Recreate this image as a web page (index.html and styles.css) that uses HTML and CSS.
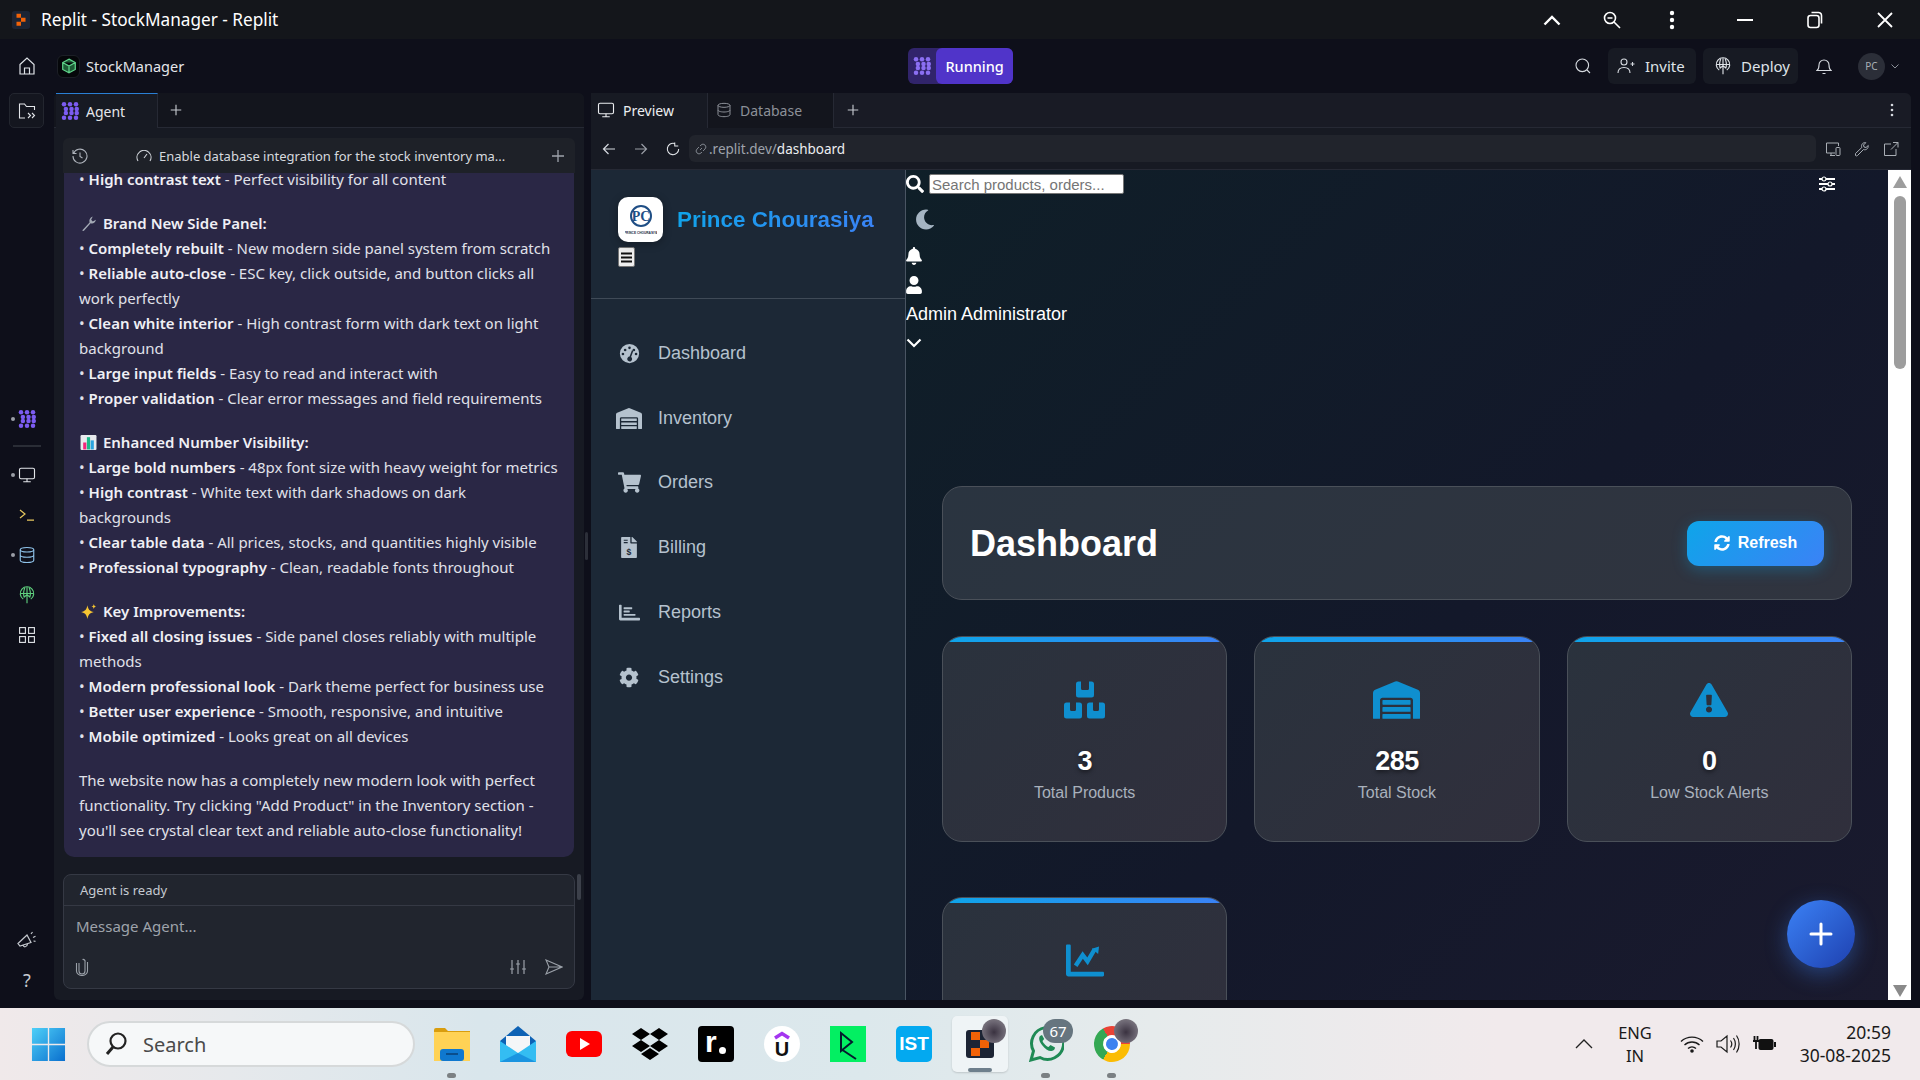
FILE: index.html
```html
<!DOCTYPE html>
<html lang="en">
<head>
  <meta charset="UTF-8" />
  <title>Replit - StockManager - Replit</title>
  <link rel="stylesheet" href="styles.css">
</head>
<body>
  <svg class="defs" width="0" height="0">
    <defs>
      <symbol id="agent" viewBox="0 0 24 24">
        <g fill="currentColor">
          <circle cx="4" cy="3" r="3"/><circle cx="12" cy="3" r="3"/><circle cx="20" cy="3" r="3"/>
          <circle cx="6.500" cy="9.300" r="3"/><circle cx="14" cy="9.300" r="3"/><circle cx="21" cy="9.300" r="3"/>
          <circle cx="6.500" cy="14.700" r="3"/><circle cx="14" cy="14.700" r="3"/><circle cx="21" cy="14.700" r="3"/>
          <circle cx="4" cy="21" r="3"/><circle cx="12" cy="21" r="3"/><circle cx="20" cy="21" r="3"/>
        </g>
      </symbol>
      <symbol id="monitor" viewBox="0 0 24 24"><rect x="2" y="3" width="20" height="14" rx="2" fill="none" stroke="currentColor" stroke-width="1.500"/><path d="M12 17v4M7 21h10" fill="none" stroke="currentColor" stroke-width="1.500"/></symbol>
      <symbol id="database" viewBox="0 0 24 24"><g fill="none" stroke="currentColor" stroke-width="1.500"><ellipse cx="12" cy="5" rx="9" ry="3"/><path d="M3 5v14c0 1.700 4 3 9 3s9-1.300 9-3V5M3 12c0 1.700 4 3 9 3s9-1.300 9-3"/></g></symbol>
      <symbol id="globe-up" viewBox="0 0 24 24"><g fill="none" stroke="currentColor" stroke-width="1.500"><path d="M7 17.500A9 9 0 1 1 17 17.500"/><path d="M3 10h18M9 2.500C7 8 7 12 8.500 15.500M15 2.500C17 8 17 12 15.500 15.500M12 1.500V23M8 15l4-3.500 4 3.500"/></g></symbol>
      <symbol id="plus" viewBox="0 0 16 16"><path d="M8 2v12M2 8h12" fill="none" stroke="currentColor" stroke-width="1.300"/></symbol>
      <symbol id="fa-gauge" viewBox="0 0 24 24"><path fill="currentColor" fill-rule="evenodd" d="M12 1a11 11 0 1 0 0 22 11 11 0 0 0 0-22zM7 6.500a1.500 1.500 0 1 1 0 3 1.500 1.500 0 0 1 0-3zM12 4a1.500 1.500 0 1 1 0 3 1.500 1.500 0 0 1 0-3zM4.500 11a1.500 1.500 0 1 1 0 3 1.500 1.500 0 0 1 0-3zM19.500 11a1.500 1.500 0 1 1 0 3 1.500 1.500 0 0 1 0-3zM17 6.500a1.500 1.500 0 1 1 0 3 1.500 1.500 0 0 1 0-3zM14.800 8.200l1.600.6-2.600 7.200a2.800 2.800 0 1 1-1.700-.5z"/></symbol>
      <symbol id="fa-warehouse" viewBox="0 0 640 512"><path fill="currentColor" d="M504 352H136.400c-4.400 0-8 3.600-8 8l-.1 48c0 4.400 3.600 8 8 8H504c4.400 0 8-3.600 8-8v-48c0-4.400-3.600-8-8-8zm0 96H136.100c-4.400 0-8 3.600-8 8l-.1 48c0 4.400 3.600 8 8 8h368c4.400 0 8-3.600 8-8v-48c0-4.400-3.600-8-8-8zm0-192H136.600c-4.400 0-8 3.600-8 8l-.1 48c0 4.400 3.600 8 8 8H504c4.400 0 8-3.600 8-8v-48c0-4.400-3.600-8-8-8zm106.500-139L338.400 3.700a48.150 48.150 0 0 0-36.900 0L29.500 117C11.700 124.500 0 141.900 0 161.300V504c0 4.400 3.600 8 8 8h80c4.400 0 8-3.600 8-8V256c0-17.600 14.600-32 32.600-32h382.800c18 0 32.600 14.400 32.600 32v248c0 4.400 3.600 8 8 8h80c4.400 0 8-3.600 8-8V161.300c0-19.400-11.700-36.800-29.500-44.300z"/></symbol>
      <symbol id="fa-cart" viewBox="0 0 576 512"><path fill="currentColor" d="M528.120 301.319l47.273-208C578.806 78.301 567.391 64 551.990 64H159.208l-9.166-44.810C147.758 8.021 137.930 0 126.529 0H24C10.745 0 0 10.745 0 24v16c0 13.255 10.745 24 24 24h69.883l70.248 343.435C147.325 417.100 136 435.222 136 456c0 30.928 25.072 56 56 56s56-25.072 56-56c0-15.674-6.447-29.835-16.824-40h209.647C430.447 426.165 424 440.326 424 456c0 30.928 25.072 56 56 56s56-25.072 56-56c0-22.172-12.888-41.332-31.579-50.405l5.517-24.276c3.413-15.018-8.002-29.319-23.403-29.319H218.117l-6.545-32h293.145c11.206 0 20.920-7.754 23.403-18.681z"/></symbol>
      <symbol id="fa-invoice" viewBox="0 0 384 512"><path fill="currentColor" d="M377 105L279.100 7c-4.500-4.500-10.600-7-17-7H256v128h128v-6.100c0-6.300-2.500-12.400-7-16.900zM224 136V0H24C10.700 0 0 10.700 0 24v464c0 13.300 10.700 24 24 24h336c13.300 0 24-10.700 24-24V160H248c-13.200 0-24-10.800-24-24z"/><path d="M64 64h96v28H64zM64 124h96v28H64z" fill="#1c2836"/><text x="192" y="430" text-anchor="middle" font-family="Liberation Sans" font-weight="700" font-size="210" fill="#1c2836">$</text></symbol>
      <symbol id="fa-bars-chart" viewBox="0 0 512 512"><path fill="currentColor" d="M496 384H64V80c0-8.840-7.160-16-16-16H16C7.160 64 0 71.160 0 80v336c0 17.670 14.330 32 32 32h464c8.840 0 16-7.160 16-16v-32c0-8.840-7.160-16-16-16z"/><rect x="112" y="130" width="210" height="44" rx="10" fill="currentColor"/><rect x="112" y="210" width="150" height="44" rx="10" fill="currentColor"/><rect x="112" y="290" width="290" height="44" rx="10" fill="currentColor"/></symbol>
      <symbol id="fa-cog" viewBox="0 0 512 512"><path fill="currentColor" d="M487.400 315.700l-42.600-24.600c4.300-23.200 4.300-47 0-70.200l42.600-24.600c4.900-2.800 7.100-8.600 5.500-14-11.100-35.600-30-67.800-54.700-94.600-3.800-4.100-10-5.100-14.800-2.300L380.800 110c-17.900-15.400-38.500-27.300-60.800-35.100V25.800c0-5.600-3.900-10.500-9.400-11.700-36.700-8.200-74.300-7.800-109.200 0-5.500 1.200-9.400 6.100-9.400 11.700V75c-22.200 7.900-42.800 19.800-60.800 35.100L88.700 85.500c-4.900-2.800-11-1.900-14.800 2.300-24.700 26.700-43.600 58.900-54.700 94.600-1.700 5.400.6 11.200 5.500 14L67.300 221c-4.300 23.200-4.300 47 0 70.200l-42.600 24.600c-4.900 2.800-7.100 8.600-5.500 14 11.100 35.600 30 67.800 54.700 94.600 3.800 4.100 10 5.100 14.800 2.300l42.600-24.600c17.900 15.400 38.500 27.300 60.800 35.100v49.200c0 5.600 3.900 10.500 9.400 11.700 36.700 8.200 74.300 7.800 109.200 0 5.500-1.200 9.400-6.100 9.400-11.700v-49.200c22.200-7.900 42.800-19.800 60.800-35.100l42.600 24.600c4.900 2.800 11 1.900 14.800-2.300 24.700-26.700 43.600-58.900 54.700-94.600 1.500-5.500-.7-11.300-5.600-14.100zM256 336c-44.100 0-80-35.900-80-80s35.900-80 80-80 80 35.900 80 80-35.900 80-80 80z"/></symbol>
      <symbol id="fa-boxes" viewBox="0 0 41 37"><path fill="currentColor" fill-rule="evenodd" d="M14.500 0h2.500v7a1.500 1.500 0 0 0 1.500 1.500h5A1.500 1.500 0 0 0 25 7V0h2.500A2.500 2.500 0 0 1 30 2.500v11a2.500 2.500 0 0 1-2.500 2.500h-13a2.500 2.500 0 0 1-2.500-2.500v-11A2.500 2.500 0 0 1 14.500 0zM2.500 21H6v7a1.500 1.500 0 0 0 1.500 1.500h3A1.500 1.500 0 0 0 12 28v-7h3.500a2.500 2.500 0 0 1 2.500 2.500v11a2.500 2.500 0 0 1-2.500 2.500h-13A2.500 2.500 0 0 1 0 34.500v-11A2.500 2.500 0 0 1 2.500 21zM25.500 21H29v7a1.500 1.500 0 0 0 1.500 1.500h3A1.500 1.500 0 0 0 35 28v-7h3.500a2.500 2.500 0 0 1 2.500 2.500v11a2.500 2.500 0 0 1-2.500 2.500h-13a2.500 2.500 0 0 1-2.500-2.500v-11a2.500 2.500 0 0 1 2.500-2.500z"/></symbol>
      <symbol id="fa-warn" viewBox="0 0 576 512"><path fill="currentColor" d="M569.517 440.013C587.975 472.007 564.806 512 527.940 512H48.054c-36.937 0-59.999-40.055-41.577-71.987L246.423 24.028c18.467-32.009 64.720-31.951 83.154 0l239.940 416.985zM288 354c-25.405 0-46 20.595-46 46s20.595 46 46 46 46-20.595 46-46-20.595-46-46-46zm-43.673-165.346l7.418 136c.347 6.364 5.609 11.346 11.982 11.346h48.546c6.373 0 11.635-4.982 11.982-11.346l7.418-136c.375-6.874-5.098-12.654-11.982-12.654h-63.383c-6.884 0-12.356 5.780-11.981 12.654z"/></symbol>
      <symbol id="fa-line" viewBox="0 0 512 512"><path fill="currentColor" d="M496 400H64V48c0-8.840-7.160-16-16-16H16C7.160 32 0 39.160 0 48v384c0 17.670 14.330 32 32 32h464c8.840 0 16-7.160 16-16v-32c0-8.840-7.160-16-16-16z"/><path d="M130 320L225 175l65 85L385 100" fill="none" stroke="currentColor" stroke-width="58"/><path d="M350 90l95-30-12 100z" fill="currentColor"/></symbol>
      <symbol id="fa-sync" viewBox="0 0 512 512"><path fill="currentColor" d="M370.720 133.280C339.458 104.008 298.888 87.962 255.848 88c-77.458.068-144.328 53.178-162.791 126.850-1.344 5.363-6.122 9.150-11.651 9.150H24.103c-7.498 0-13.194-6.807-11.807-14.176C33.933 94.924 134.813 8 256 8c66.448 0 126.791 26.136 171.315 68.685L463.030 40.970C478.149 25.851 504 36.559 504 57.941V192c0 13.255-10.745 24-24 24H345.941c-21.382 0-32.090-25.851-16.971-40.971l41.750-41.749zM32 296h134.059c21.382 0 32.090 25.851 16.971 40.971l-41.750 41.750c31.262 29.273 71.835 45.319 114.876 45.280 77.418-.07 144.315-53.144 162.787-126.849 1.344-5.363 6.122-9.150 11.651-9.150h57.304c7.498 0 13.194 6.807 11.807 14.176C478.067 417.076 377.187 504 256 504c-66.448 0-126.791-26.136-171.315-68.685L48.970 471.030C33.851 486.149 8 475.441 8 454.059V320c0-13.255 10.745-24 24-24z"/></symbol>
    </defs>
  </svg>

  <!-- window title -->
  <div class="titlebar">
    <svg class="title-logo" viewBox="0 0 20 20"><rect width="20" height="20" rx="3" fill="#1c2434"/><path d="M5 3h5v4.500H5zM10 7.500h5V12h-5zM5 12h5v4.500H5z" fill="#f26207"/></svg>
    <span class="title-text">Replit - StockManager - Replit</span>
    <div class="win-tools">
      <button class="win-btn"><svg width="18" height="12" viewBox="0 0 18 12"><path d="M1.500 10.500L9 3l7.500 7.500" fill="none" stroke="#fff" stroke-width="2.400"/></svg></button>
      <button class="win-btn"><svg width="18" height="18" viewBox="0 0 18 18"><g fill="none" stroke="#fff" stroke-width="1.600"><circle cx="7" cy="7" r="5.500"/><path d="M4.500 7h5M11 11l6 6"/></g></svg></button>
      <button class="win-btn"><svg width="6" height="20" viewBox="0 0 6 20"><g fill="#fff"><circle cx="3" cy="3" r="2.200"/><circle cx="3" cy="10" r="2.200"/><circle cx="3" cy="17" r="2.200"/></g></svg></button>
    </div>
    <button class="win-ctl"><svg width="16" height="2" viewBox="0 0 16 2"><path d="M0 1h16" stroke="#fff" stroke-width="2"/></svg></button>
    <button class="win-ctl"><svg width="16" height="18" viewBox="0 0 16 18"><g fill="none" stroke="#fff" stroke-width="1.600"><rect x="1" y="4.500" width="11" height="12" rx="2.500"/><path d="M4.500 1.500h6.500a3 3 0 0 1 3.500 3v8"/></g></svg></button>
    <button class="win-ctl"><svg width="16" height="16" viewBox="0 0 16 16"><path d="M1 1l14 14M15 1L1 15" stroke="#fff" stroke-width="1.800"/></svg></button>
  </div>

  <!-- replit header -->
  <div class="topbar">
    <svg class="home-icon" viewBox="0 0 16 18"><path d="M1 7.500L8 1l7 6.500V17H1zM5.500 17v-6h5v6" fill="none" stroke="#dfe3e8" stroke-width="1.200"/></svg>
    <div class="app-icon"><svg width="16" height="16" viewBox="0 0 14 14"><path d="M7 1l5.500 3v6L7 13l-5.500-3V4zM1.500 4L7 7l5.500-3M7 7v6" fill="#1d5c36" stroke="#5fd38a" stroke-width="1.100"/></svg></div>
    <span class="app-name">StockManager</span>
    <div class="run-btn">
      <span class="run-agent"><svg class="ic-18"><use href="#agent"/></svg></span>
      <span class="run-label">Running</span>
    </div>
    <div class="top-right">
      <svg class="top-search" viewBox="0 0 16 16"><g fill="none" stroke="#d5d9df" stroke-width="1.100"><circle cx="7.300" cy="7.300" r="6.300"/><path d="M12 12l3 3"/></g></svg>
      <button class="top-btn invite">
        <svg width="18" height="18" viewBox="0 0 18 18"><g fill="none" stroke="#d5d9df" stroke-width="1.100"><circle cx="7" cy="5" r="3"/><path d="M1 16c0-3.500 2-5.500 6-5.500s6 2 6 5.500M13.500 7h4M15.500 5v4"/></g></svg>
        Invite
      </button>
      <button class="top-btn deploy">
        <svg class="ic-18"><use href="#globe-up"/></svg>
        Deploy
      </button>
      <svg class="top-bell" viewBox="0 0 16 18"><path d="M1 13.500c1.500-1 2-2.500 2-5.500a5 5 0 0 1 10 0c0 3 .5 4.500 2 5.500zM6.500 16.500h3" fill="none" stroke="#d5d9df" stroke-width="1.100"/></svg>
      <span class="avatar">PC</span>
      <svg class="avatar-caret" width="8" height="5" viewBox="0 0 8 5"><path d="M.5.500L4 4 7.500.500" fill="none" stroke="#8a8f98" stroke-width="1"/></svg>
    </div>
  </div>

  <div class="workspace">
    <!-- left rail -->
    <div class="rail">
      <button class="rail-toggle"><svg width="18" height="18" viewBox="0 0 18 18"><path d="M7 16H1.500V2h5l2 2.500h8V8M10 11l2.500 2.500L10 16M14 11l2.500 2.500L14 16" fill="none" stroke="#e3e6ea" stroke-width="1.100"/></svg></button>
      <div class="rail-list">
        <div class="rail-item dot agent-color"><svg class="ic-18"><use href="#agent"/></svg></div>
        <div class="rail-sep"></div>
        <div class="rail-item dot"><svg class="ic-18"><use href="#monitor"/></svg></div>
        <div class="rail-item"><svg width="16" height="12" viewBox="0 0 16 12"><path d="M1 1l5 4-5 4M8 11.200h7" fill="none" stroke="#e7c85f" stroke-width="1.200"/></svg></div>
        <div class="rail-item dot db-color"><svg class="ic-18"><use href="#database"/></svg></div>
        <div class="rail-item globe-color"><svg class="ic-18"><use href="#globe-up"/></svg></div>
        <div class="rail-item"><svg width="16" height="16" viewBox="0 0 16 16"><g fill="none" stroke="#e3e6ea" stroke-width="1.100"><rect x=".6" y=".6" width="5.800" height="5.800"/><rect x="9.600" y=".6" width="5.800" height="5.800"/><rect x=".6" y="9.600" width="5.800" height="5.800"/><rect x="9.600" y="9.600" width="5.800" height="5.800"/></g></svg></div>
      </div>
      <div class="rail-bottom">
        <div class="rail-item"><svg width="20" height="18" viewBox="0 0 20 18"><path d="M1 12.500L10 4l4 7.500-11 3.500zM6 14c.5 2.500 4 2.500 4.500-.8M14 3l1.500-2M16 6.500l2.500-1.200M16.500 10l2 .3" fill="none" stroke="#c5c9cf" stroke-width="1.200"/></svg></div>
        <div class="rail-item help">?</div>
      </div>
    </div>

    <!-- agent panel -->
    <div class="agent-panel">
      <div class="tabs">
        <div class="tab tab-agent"><svg class="ic-18 agent-color"><use href="#agent"/></svg>Agent</div>
        <svg class="tab-plus"><use href="#plus"/></svg>
      </div>
      <div class="chat-head">
        <svg width="16" height="16" viewBox="0 0 16 16"><g fill="none" stroke="#aeb3bb" stroke-width="1.100"><path d="M1.500 5.500A7 7 0 1 1 1 8M1 2v3.500h3.500M8 4.500V8.500l2.500 1.500"/></g></svg>
        <svg class="chat-gauge" width="16" height="12" viewBox="0 0 16 12"><path d="M2 11a7 7 0 1 1 12 0M8 8l3-4" fill="none" stroke="#cfd3d9" stroke-width="1.100"/></svg>
        <span class="chat-title">Enable database integration for the stock inventory ma...</span>
        <svg class="chat-plus"><use href="#plus"/></svg>
      </div>
      <div class="chat-msg">
        <div class="msg-inner">
          <p class="para">
            <span class="line">• <b>High contrast text</b> - Perfect visibility for all content</span>
          </p>
          <p class="para">
            <span class="line"><svg class="emoji" viewBox="0 0 16 16"><path d="M2 14.500L9 7c-.7-2 .3-4.500 3-5.500l-1.500 3 1.500 1.500 3-1.500c-.5 2.700-3 4-5 3.200L3.500 15z" fill="#a3a9b5"/></svg> <b>Brand New Side Panel:</b></span>
            <span class="line">• <b>Completely rebuilt</b> - New modern side panel system from scratch</span>
            <span class="line">• <b>Reliable auto-close</b> - ESC key, click outside, and button clicks all</span>
            <span class="line">work perfectly</span>
            <span class="line">• <b>Clean white interior</b> - High contrast form with dark text on light</span>
            <span class="line">background</span>
            <span class="line">• <b>Large input fields</b> - Easy to read and interact with</span>
            <span class="line">• <b>Proper validation</b> - Clear error messages and field requirements</span>
          </p>
          <p class="para">
            <span class="line"><svg class="emoji" viewBox="0 0 16 16"><rect x=".5" y="1" width="15" height="14" rx="1" fill="#e8eaee"/><rect x="3" y="8" width="3" height="6.500" fill="#f4257a"/><rect x="6.500" y="3" width="3" height="11.500" fill="#1bb98a"/><rect x="10" y="6" width="3" height="8.500" fill="#2aa4e0"/></svg> <b>Enhanced Number Visibility:</b></span>
            <span class="line">• <b>Large bold numbers</b> - 48px font size with heavy weight for metrics</span>
            <span class="line">• <b>High contrast</b> - White text with dark shadows on dark</span>
            <span class="line">backgrounds</span>
            <span class="line">• <b>Clear table data</b> - All prices, stocks, and quantities highly visible</span>
            <span class="line">• <b>Professional typography</b> - Clean, readable fonts throughout</span>
          </p>
          <p class="para">
            <span class="line"><svg class="emoji" viewBox="0 0 16 16"><path d="M7 2c.8 4 2 5.500 6 6.500-4 1-5.200 2.500-6 6.500-.8-4-2-5.500-6-6.500 4-1 5.200-2.500 6-6.500zM13 1c.3 1.500.8 2 2.300 2.300-1.500.3-2 .8-2.300 2.300-.3-1.500-.8-2-2.300-2.300C12.200 3 12.700 2.500 13 1z" fill="#f7c531"/></svg> <b>Key Improvements:</b></span>
            <span class="line">• <b>Fixed all closing issues</b> - Side panel closes reliably with multiple</span>
            <span class="line">methods</span>
            <span class="line">• <b>Modern professional look</b> - Dark theme perfect for business use</span>
            <span class="line">• <b>Better user experience</b> - Smooth, responsive, and intuitive</span>
            <span class="line">• <b>Mobile optimized</b> - Looks great on all devices</span>
          </p>
          <p class="para">
            <span class="line">The website now has a completely new modern look with perfect</span>
            <span class="line">functionality. Try clicking "Add Product" in the Inventory section -</span>
            <span class="line">you'll see crystal clear text and reliable auto-close functionality!</span>
          </p>
        </div>
      </div>
      <div class="composer">
        <div class="composer-status">Agent is ready</div>
        <div class="composer-input">Message Agent...</div>
        <div class="composer-actions">
          <svg width="14" height="18" viewBox="0 0 14 18"><path d="M4 5v8a3 3 0 0 0 6 0V4a2 2 0 0 0-2.500-2.500M1.500 5v8a5.500 4.500 0 0 0 11 0V4" fill="none" stroke="#9aa0a8" stroke-width="1.100"/></svg>
          <svg class="composer-tune" width="18" height="16" viewBox="0 0 18 16"><path d="M3 1v14M9 1v14M15 1v14M1 10h4M7 5h4M13 10h4" fill="none" stroke="#9aa0a8" stroke-width="1.200"/></svg>
          <svg width="18" height="16" viewBox="0 0 18 16"><path d="M1 1l16 7-16 7 3-7zM4 8h13" fill="none" stroke="#9aa0a8" stroke-width="1.100"/></svg>
        </div>
      </div>
      <span class="composer-thumb"></span>
    </div>

    <div class="splitter"></div>

    <!-- preview panel -->
    <div class="preview-panel">
      <div class="tabs">
        <div class="tab tab-preview"><svg class="ic-18"><use href="#monitor"/></svg>Preview</div>
        <div class="tab tab-db"><svg class="ic-16"><use href="#database"/></svg>Database</div>
        <svg class="tab-plus"><use href="#plus"/></svg>
        <svg class="tab-kebab" width="4" height="14" viewBox="0 0 4 14"><g fill="#d5d9df"><circle cx="2" cy="2" r="1.300"/><circle cx="2" cy="7" r="1.300"/><circle cx="2" cy="12" r="1.300"/></g></svg>
      </div>
      <div class="browser-bar">
        <svg class="nav-ic" viewBox="0 0 14 14"><path d="M13 7H1.500M6.500 2L1.500 7l5 5" fill="none" stroke="#d5d9df" stroke-width="1.200"/></svg>
        <svg class="nav-ic" viewBox="0 0 14 14"><path d="M1 7h11.500M7.500 2l5 5-5 5" fill="none" stroke="#9a9ea6" stroke-width="1.200"/></svg>
        <svg class="nav-ic" viewBox="0 0 16 16"><path d="M14.500 8A6.500 6.500 0 1 1 10 1.800M10 .5v4h4" fill="none" stroke="#e4e7eb" stroke-width="1.200"/></svg>
        <div class="url-bar">
          <svg width="14" height="14" viewBox="0 0 14 14"><path d="M6 8l2-2M5 5L3 7a2.800 2.800 0 0 0 4 4l1-1M9 9l2-2a2.800 2.800 0 0 0-4-4L6 4" fill="none" stroke="#7f848c" stroke-width="1"/></svg>
          <span class="url-host">.replit.dev/</span><span class="url-path">dashboard</span>
        </div>
        <svg class="bar-ic first" viewBox="0 0 16 16"><path d="M10 12H1.500V2h12v3M5 14.500h5M6 12v2.500" fill="none" stroke="#a9aeb5" stroke-width="1"/><rect x="11" y="6.500" width="4" height="8" rx=".8" fill="none" stroke="#a9aeb5"/></svg>
        <svg class="bar-ic" viewBox="0 0 16 16"><path d="M1.500 14.500a1.500 1.500 0 0 0 2 0l6-6c2.500 1 5-1 4.800-4l-2.300 2-2-.5-.5-2 2.300-2.300c-3-.5-5 2-4 4.800l-6.300 6z" fill="none" stroke="#a9aeb5" stroke-width="1"/></svg>
        <svg class="bar-ic" viewBox="0 0 16 16"><path d="M8 3H1.500v11.500H13V8M8 8.500L15 1.500M10 1.500h5v5" fill="none" stroke="#a9aeb5" stroke-width="1"/></svg>
      </div>

      <div class="app-frame">
        <aside class="sidebar">
          <div class="side-head">
            <div class="brand">
              <div class="brand-logo">
                <svg width="32" height="36" viewBox="0 0 32 36"><circle cx="16" cy="14" r="10" fill="#fff" stroke="#1f4e85" stroke-width="2"/><text x="16" y="19" text-anchor="middle" font-family="Liberation Serif" font-size="14" font-weight="700" fill="#1f4e85">PC</text><text x="16" y="32" text-anchor="middle" font-family="Liberation Sans" font-size="3.200" font-weight="700" fill="#1b2b45">PRINCE CHOURASIYA</text></svg>
              </div>
              <h2 class="brand-name">Prince Chourasiya</h2>
            </div>
            <button class="menu-btn"><svg width="11" height="11" viewBox="0 0 11 11"><path d="M0 1.500h11M0 5.500h11M0 9.500h11" stroke="#111" stroke-width="1.800"/></svg></button>
          </div>
          <nav class="side-nav">
            <a class="nav-item"><span class="nav-ic-box"><svg width="21" height="21"><use href="#fa-gauge"/></svg></span>Dashboard</a>
            <a class="nav-item"><span class="nav-ic-box"><svg width="26" height="21"><use href="#fa-warehouse"/></svg></span>Inventory</a>
            <a class="nav-item"><span class="nav-ic-box"><svg width="23" height="21"><use href="#fa-cart"/></svg></span>Orders</a>
            <a class="nav-item"><span class="nav-ic-box"><svg width="16" height="21"><use href="#fa-invoice"/></svg></span>Billing</a>
            <a class="nav-item"><span class="nav-ic-box"><svg width="21" height="21"><use href="#fa-bars-chart"/></svg></span>Reports</a>
            <a class="nav-item"><span class="nav-ic-box"><svg width="20" height="21"><use href="#fa-cog"/></svg></span>Settings</a>
          </nav>
        </aside>

        <main class="main">
          <header class="app-top">
            <div class="search-row">
              <svg width="18" height="18" viewBox="0 0 512 512"><path fill="#fff" d="M505 442.700L405.300 343c-4.500-4.500-10.600-7-17-7H372c27.600-35.300 44-79.700 44-128C416 93.100 322.900 0 208 0S0 93.100 0 208s93.100 208 208 208c48.300 0 92.700-16.400 128-44v16.300c0 6.400 2.500 12.500 7 17l99.700 99.700c9.400 9.400 24.600 9.400 33.900 0l28.300-28.300c9.400-9.400 9.400-24.600.1-34zM208 336c-70.700 0-128-57.200-128-128 0-70.700 57.200-128 128-128 70.700 0 128 57.200 128 128 0 70.700-57.200 128-128 128z"/></svg>
              <input class="search-input" type="text" placeholder="Search products, orders..." />
              <svg class="tune-ic" width="16" height="16" viewBox="0 0 16 16"><path d="M0 3h16M0 8h16M0 13h16" stroke="#fff" stroke-width="1.800"/><g fill="#101a22" stroke="#fff" stroke-width="1.200"><circle cx="5" cy="3" r="2"/><circle cx="11" cy="8" r="2"/><circle cx="5" cy="13" r="2"/></g></svg>
            </div>
            <svg class="moon" width="20" height="21" viewBox="0 0 512 512"><path fill="#a5b4c2" d="M283.211 512c78.962 0 151.079-35.925 198.857-94.792 7.068-8.708-.639-21.430-11.562-19.350-124.203 23.654-238.262-71.576-238.262-196.954 0-72.222 38.662-138.635 101.498-174.394 9.686-5.512 7.250-20.197-3.756-22.230A258.156 258.156 0 0 0 283.211 0c-141.309 0-256 114.511-256 256 0 141.309 114.511 256 256 256z"/></svg>
            <svg class="bell" width="16" height="18" viewBox="0 0 448 512"><path fill="#fff" d="M224 512c35.320 0 63.970-28.650 63.970-64H160.030c0 35.350 28.650 64 63.970 64zm215.390-149.710c-19.320-20.760-55.470-51.990-55.470-154.290 0-77.700-54.480-139.900-127.940-155.160V32c0-17.670-14.320-32-31.980-32s-31.980 14.330-31.980 32v20.840C118.560 68.100 64.080 130.300 64.080 208c0 102.300-36.150 133.530-55.470 154.290-6 6.450-8.660 14.160-8.610 21.710.11 16.400 12.980 32 32.100 32h383.800c19.120 0 32-15.600 32.100-32 .05-7.550-2.610-15.270-8.610-21.710z"/></svg>
            <svg class="user" width="16" height="18" viewBox="0 0 448 512"><path fill="#fff" d="M224 256c70.700 0 128-57.300 128-128S294.700 0 224 0 96 57.300 96 128s57.300 128 128 128zm89.600 32h-16.700c-22.200 10.200-46.900 16-72.900 16s-50.600-5.800-72.900-16h-16.700C60.200 288 0 348.200 0 422.400V464c0 26.500 21.500 48 48 48h352c26.500 0 48-21.500 48-48v-41.600c0-74.200-60.200-134.400-134.400-134.400z"/></svg>
            <div class="user-name">Admin Administrator</div>
            <svg class="caret" width="16" height="10" viewBox="0 0 16 10"><path d="M1.500 1.500L8 8l6.500-6.500" fill="none" stroke="#fff" stroke-width="2.200"/></svg>
          </header>

          <section class="content">
            <div class="page-head">
              <h1>Dashboard</h1>
              <button class="refresh-btn"><svg width="16" height="16"><use href="#fa-sync"/></svg>Refresh</button>
            </div>
            <div class="stats">
              <div class="stat-card">
                <svg class="stat-ic" width="41" height="37"><use href="#fa-boxes"/></svg>
                <div class="stat-num">3</div>
                <div class="stat-label">Total Products</div>
              </div>
              <div class="stat-card">
                <svg class="stat-ic" width="47" height="38"><use href="#fa-warehouse"/></svg>
                <div class="stat-num">285</div>
                <div class="stat-label">Total Stock</div>
              </div>
              <div class="stat-card">
                <svg class="stat-ic" width="38" height="34"><use href="#fa-warn"/></svg>
                <div class="stat-num">0</div>
                <div class="stat-label">Low Stock Alerts</div>
              </div>
              <div class="stat-card">
                <svg class="stat-ic" width="38" height="38"><use href="#fa-line"/></svg>
              </div>
            </div>
          </section>
          <button class="fab"><svg width="24" height="24" viewBox="0 0 24 24"><path d="M12 2v20M2 12h20" stroke="#fff" stroke-width="3" stroke-linecap="round"/></svg></button>
        </main>

        <div class="scrollbar">
          <span class="arrow-up"></span>
          <span class="thumb"></span>
          <span class="arrow-down"></span>
        </div>
      </div>
    </div>
  </div>

  <!-- windows taskbar -->
  <footer class="taskbar">
    <svg class="win-logo" viewBox="0 0 36 36">
      <defs><linearGradient id="winblue" x1="0" y1="0" x2="1" y2="1"><stop offset="0" stop-color="#4fd0f8"/><stop offset="1" stop-color="#0a6fce"/></linearGradient></defs>
      <path d="M1 1h16.300v16.300H1zM18.700 1H35v16.300H18.700zM1 18.700h16.300V35H1zM18.700 18.700H35V35H18.700z" fill="url(#winblue)"/>
    </svg>
    <div class="task-search">
      <svg width="22" height="24" viewBox="0 0 22 24"><g fill="none" stroke="#222" stroke-width="2.200"><circle cx="13" cy="9" r="7.500"/><path d="M8 15l-6 7" stroke-width="3"/></g></svg>
      <span>Search</span>
    </div>
    <div class="task-apps">
      <div class="app-slot running">
        <svg width="36" height="34" viewBox="0 0 36 34"><path d="M0 3a2 2 0 0 1 2-2h9l3 3h22v6H0z" fill="#d99d0e"/><path d="M0 5h36v29H0z" fill="#ffd255"/><rect x="6" y="22" width="24" height="12" rx="3" fill="#0f78cf"/><path d="M12 27h12" stroke="#0a4e8c" stroke-width="2"/></svg>
      </div>
      <div class="app-slot">
        <svg width="36" height="36" viewBox="0 0 36 36"><path d="M0 15L18 0l18 15v21H0z" fill="#0d62b5"/><path d="M6 10h24v17H6z" fill="#f4f6f8"/><path d="M0 15l18 12 18-12v21H0z" fill="#34bdf2"/><path d="M0 36l18-9 18 9z" fill="#1a94e0"/></svg>
      </div>
      <div class="app-slot">
        <svg width="36" height="26" viewBox="0 0 36 26"><rect width="36" height="26" rx="6" fill="#f00"/><path d="M14 7l10 6-10 6z" fill="#fff"/></svg>
      </div>
      <div class="app-slot">
        <svg width="36" height="32" viewBox="0 0 36 32"><path d="M9 0l9 6-9 6-9-6zM27 0l9 6-9 6-9-6zM9 12l9 6-9 6-9-6zM27 12l9 6-9 6-9-6zM18 20l9 6-9 6-9-6z" fill="#000"/></svg>
      </div>
      <div class="app-slot"><div class="ic-rtg">r<i></i></div></div>
      <div class="app-slot"><div class="ic-udemy"><svg width="36" height="36" viewBox="0 0 36 36"><path d="M11 12l7-4.500 7 4.500" fill="none" stroke="#a435f0" stroke-width="3.500"/><text x="18" y="30" text-anchor="middle" font-family="Liberation Sans" font-weight="700" font-size="20" fill="#111">U</text></svg></div></div>
      <div class="app-slot"><div class="ic-dc"><svg width="36" height="36" viewBox="0 0 36 36"><path d="M11 7v18l11-9zM11 25v-2l15 10" fill="none" stroke="#05192d" stroke-width="2"/></svg></div></div>
      <div class="app-slot"><div class="ic-ist">IST</div></div>
      <div class="app-slot active">
        <svg width="28" height="28" viewBox="0 0 28 28"><rect width="28" height="28" rx="3" fill="#1c2434"/><path d="M5 2h9v8H5zM14 10h9v8h-9zM5 18h9v8H5z" fill="#f26207"/></svg>
        <span class="thumb-pic"></span>
      </div>
      <div class="app-slot running">
        <svg width="36" height="36" viewBox="0 0 36 36"><path d="M3 34l2.500-9A16 16 0 1 1 12 31.500z" fill="none" stroke="#1f8a55" stroke-width="3"/><path d="M12 10c-1.500 2-1 5 2 9s7 6.500 9.500 6 3.500-2 3.500-3.500l-4.500-2.500-2 2c-2-.5-5-3.500-6-6l1.700-2L14 9z" fill="#1f8a55"/></svg>
        <span class="count-badge">67</span>
      </div>
      <div class="app-slot running">
        <div class="ic-chrome"><i></i></div>
        <span class="thumb-pic"></span>
      </div>
    </div>
    <div class="tray">
      <svg class="tray-caret" width="18" height="10" viewBox="0 0 18 10"><path d="M1 9l8-8 8 8" fill="none" stroke="#222" stroke-width="1.300"/></svg>
      <div class="lang">ENG<br>IN</div>
      <svg class="tray-ic" width="24" height="18" viewBox="0 0 24 18"><path d="M1 6.500a16 16 0 0 1 22 0M4.500 10a11 11 0 0 1 15 0M8 13.500a6 6 0 0 1 8 0" fill="none" stroke="#1a1a1a" stroke-width="1.400"/><circle cx="12" cy="16" r="1.800" fill="#1a1a1a"/></svg>
      <svg class="tray-ic" width="24" height="20" viewBox="0 0 24 20"><path d="M1 7v6h4l6 5V2L5 7zM14.500 6.500c1.500 2 1.500 5 0 7M17.500 4c2.500 3.500 2.500 8.500 0 12M20.500 1.500c3.500 5 3.500 12 0 17" fill="none" stroke="#1a1a1a" stroke-width="1.200"/></svg>
      <svg class="tray-ic" width="24" height="20" viewBox="0 0 24 20"><path d="M1 7h6M2.500 2v5M5.500 2v5M4 7v8" fill="none" stroke="#111" stroke-width="1.800"/><rect x="6.500" y="5" width="15" height="11" rx="2" fill="#111"/><rect x="22" y="8" width="2" height="5" fill="#111"/></svg>
      <div class="clock">20:59<br>30-08-2025</div>
    </div>
  </footer>
</body>
</html>
```

FILE: styles.css
```css
* {
  box-sizing: border-box;
}
html, body {
  margin: 0;
  width: 1920px;
  height: 1080px;
  overflow: hidden;
}
body {
  display: flex;
  flex-direction: column;
  background: #0e0f1a;
  color: #e4e6ea;
  font-family: "Noto Sans", "Liberation Sans", sans-serif;
}
button {
  font-family: inherit;
  border: none;
  background: none;
  color: inherit;
  padding: 0;
}
.defs {
  position: absolute;
}
.ic-18 {
  width: 18px;
  height: 18px;
}
.ic-16 {
  width: 16px;
  height: 16px;
}

/* title bar */
.titlebar {
  height: 39px;
  flex: none;
  display: flex;
  align-items: center;
  background: #14161b;
  padding-left: 12px;
}
.title-logo {
  width: 18px;
  height: 20px;
  margin-right: 11px;
}
.title-text {
  font-size: 17.200px;
  color: #fff;
}
.win-tools {
  margin-left: auto;
  margin-right: 8px;
  display: flex;
}
.win-btn {
  width: 60px;
  height: 39px;
  display: flex;
  align-items: center;
  justify-content: center;
}
.win-ctl {
  width: 70px;
  height: 39px;
  display: flex;
  align-items: center;
  justify-content: center;
}

/* replit header */
.topbar {
  height: 54px;
  flex: none;
  display: flex;
  align-items: center;
  padding-left: 19px;
  position: relative;
}
.home-icon {
  width: 16px;
  height: 18px;
}
.app-icon {
  width: 23px;
  height: 23px;
  margin-left: 22px;
  background: #05070a;
  border: 1px solid #1c1f26;
  border-radius: 6px;
  display: flex;
  align-items: center;
  justify-content: center;
}
.app-name {
  font-size: 14.500px;
  margin-left: 6px;
}
.run-btn {
  display: flex;
  height: 36px;
  margin-left: 724px;
  background: #31246b;
  border-radius: 6px;
}
.run-agent {
  width: 28px;
  display: flex;
  align-items: center;
  justify-content: center;
  color: #8b6ff2;
}
.run-label {
  width: 77px;
  display: flex;
  align-items: center;
  justify-content: center;
  background: #5034c9;
  border-radius: 6px;
  font-size: 14.500px;
  font-weight: 500;
  color: #fff;
}
.top-right {
  margin-left: auto;
  display: flex;
  align-items: center;
  padding-right: 21px;
}
.top-search {
  width: 16px;
  height: 16px;
  margin-right: 17px;
}
.top-btn {
  height: 36px;
  display: flex;
  align-items: center;
  gap: 10px;
  background: #171a23;
  border-radius: 6px;
  font-size: 15px;
  color: #dfe3e8;
}
.invite {
  width: 88px;
  padding-left: 9px;
}
.deploy {
  width: 95px;
  margin-left: 7px;
  padding-left: 11px;
  gap: 9px;
}
.top-bell {
  width: 16px;
  height: 18px;
  margin-left: 18px;
}
.avatar {
  width: 27px;
  height: 27px;
  margin-left: 26px;
  border-radius: 50%;
  background: #2b2e38;
  color: #a9aeb6;
  font-size: 10px;
  display: flex;
  align-items: center;
  justify-content: center;
}
.avatar-caret {
  margin-left: 6px;
}

/* workspace */
.workspace {
  height: 907px;
  flex: none;
  display: flex;
}
.rail {
  width: 54px;
  flex: none;
  display: flex;
  flex-direction: column;
  position: relative;
}
.rail-toggle {
  width: 35px;
  height: 35px;
  margin-left: 9px;
  border: 1px solid #23262f;
  border-radius: 5px;
  background: #14161f;
  display: flex;
  align-items: center;
  justify-content: center;
}
.rail-list {
  margin-top: 271px;
}
.rail-item {
  position: relative;
  height: 40px;
  display: flex;
  align-items: center;
  justify-content: center;
  color: #e3e6ea;
}
.rail-item.dot::before {
  content: "";
  position: absolute;
  left: 11px;
  top: 18px;
  width: 4px;
  height: 4px;
  border-radius: 50%;
  background: #9a9ea6;
}
.rail-sep {
  width: 28px;
  height: 2px;
  margin: 6px auto 8px;
  background: #2a2d36;
}
.rail-bottom {
  margin-top: auto;
}
.help {
  font-size: 18px;
  color: #c5c9cf;
}
.rail-item.agent-color,
.agent-color {
  color: #7c5cf2;
}
.rail-item.db-color {
  color: #8fc3ea;
}
.rail-item.globe-color {
  color: #5fd07e;
}

/* shared tabs */
.tabs {
  height: 35px;
  flex: none;
  display: flex;
  align-items: center;
  border-bottom: 1px solid #262934;
  background: #13151d;
  border-radius: 6px 6px 0 0;
}
.tab {
  height: 35px;
  display: flex;
  align-items: center;
  font-size: 14px;
}
.tab-plus {
  width: 14px;
  height: 14px;
  color: #c5c9cf;
}

/* agent panel */
.agent-panel {
  width: 530px;
  flex: none;
  display: flex;
  flex-direction: column;
  position: relative;
  background: #171a23;
  border-radius: 6px;
}
.tab-agent {
  width: 102px;
  margin-left: 2px;
  padding-left: 5px;
  gap: 7px;
  background: #171a23;
  border-top: 1px solid #2a7fd4;
  border-right: 1px solid #262934;
  margin-bottom: -1px;
}
.agent-panel .tab-plus {
  margin-left: 11px;
}
.chat-head {
  position: relative;
  z-index: 1;
  height: 35px;
  margin: 10px 9px 0;
  flex: none;
  display: flex;
  align-items: center;
  padding-left: 9px;
  background: #1e2128;
  border-radius: 6px 6px 0 0;
}
.chat-gauge {
  margin-left: 48px;
}
.chat-title {
  margin-left: 7px;
  font-size: 13px;
  color: #d6d9de;
  white-space: nowrap;
}
.chat-plus {
  width: 16px;
  height: 16px;
  margin-left: auto;
  margin-right: 9px;
  color: #9ea3ab;
}
.chat-msg {
  height: 684px;
  margin: 0 10px;
  flex: none;
  overflow: hidden;
  background: #2a2745;
  border-radius: 0 0 10px 10px;
}
.msg-inner {
  margin-top: -6px;
  padding-left: 15px;
  font-size: 15px;
  line-height: 25px;
  color: #e0e1e9;
  white-space: nowrap;
}
.msg-inner b {
  color: #f0f0f5;
  font-weight: 600;
}
.para {
  margin: 0 0 19px;
}
.line {
  display: block;
}
.emoji {
  width: 17px;
  height: 17px;
  vertical-align: -3px;
  margin: 0 2px 0 1px;
}
.composer {
  height: 115px;
  margin: 17px 9px 0;
  flex: none;
  background: #21252e;
  border: 1px solid #353944;
  border-radius: 8px;
}
.composer-status {
  height: 31px;
  padding-left: 16px;
  font-size: 13px;
  line-height: 30px;
  color: #c5cad1;
  border-bottom: 1px solid #353944;
}
.composer-input {
  height: 52px;
  padding: 10px 0 0 12px;
  font-size: 15px;
  color: #9ea3ab;
}
.composer-actions {
  display: flex;
  align-items: center;
  padding: 0 11px 0 11px;
}
.composer-tune {
  margin-left: auto;
  margin-right: 18px;
}
.composer-thumb {
  position: absolute;
  left: 523px;
  top: 781px;
  width: 4px;
  height: 26px;
  border-radius: 2px;
  background: #3c404a;
}
.splitter {
  width: 7px;
  flex: none;
  position: relative;
}
.splitter::after {
  content: "";
  position: absolute;
  left: 1px;
  top: 439px;
  width: 3px;
  height: 28px;
  border-radius: 2px;
  background: #2c2f39;
}

/* preview panel */
.preview-panel {
  width: 1320px;
  flex: none;
  display: flex;
  flex-direction: column;
  background: #171a23;
  border-radius: 6px;
}
.preview-panel .tabs {
  background: #191b25;
}
.tab-preview {
  width: 117px;
  padding-left: 6px;
  gap: 8px;
  color: #eceef1;
  background: #171a23;
  border-right: 1px solid #262934;
}
.tab-db {
  width: 126px;
  padding-left: 8px;
  gap: 8px;
  color: #8c9098;
  background: #13151d;
  border-right: 1px solid #262934;
}
.preview-panel .tab-plus {
  margin-left: 12px;
}
.tab-kebab {
  margin-left: auto;
  margin-right: 17px;
}
.browser-bar {
  height: 42px;
  flex: none;
  display: flex;
  align-items: center;
  padding-left: 11px;
  border-bottom: 1px solid #262934;
}
.nav-ic {
  width: 14px;
  height: 14px;
  margin-right: 18px;
}
.url-bar {
  width: 1127px;
  height: 27px;
  margin-left: -9px;
  display: flex;
  align-items: center;
  padding-left: 5px;
  background: #21242c;
  border-radius: 6px;
  font-size: 13.500px;
}
.url-host {
  margin-left: 1px;
  color: #9ea3ab;
}
.url-path {
  color: #eceef1;
}
.bar-ic {
  width: 16px;
  height: 16px;
  margin-left: 13px;
}
.bar-ic.first {
  margin-left: 9px;
}
.app-frame {
  flex: 1;
  min-height: 0;
  display: flex;
  font-family: "Liberation Sans", Arial, sans-serif;
}

/* app sidebar */
.sidebar {
  width: 315px;
  flex: none;
  background: #1c2836;
  border-right: 1px solid #4a5563;
}
.side-head {
  height: 129px;
  padding: 27px 0 0 27px;
  border-bottom: 1px solid #3f4a57;
}
.brand {
  display: flex;
  align-items: center;
  gap: 14px;
}
.brand-logo {
  width: 45px;
  height: 45px;
  border-radius: 10px;
  background: #fff;
  box-shadow: 0 2px 8px rgba(0, 0, 0, 0.3);
  display: flex;
  align-items: center;
  justify-content: center;
}
.brand-name {
  margin: 0;
  font-size: 22.400px;
  font-weight: 700;
  white-space: nowrap;
  background: linear-gradient(135deg, #0ea5e9, #3b82f6);
  -webkit-background-clip: text;
  background-clip: text;
  color: transparent;
}
.menu-btn {
  display: flex;
  align-items: center;
  justify-content: center;
  width: 17px;
  height: 20px;
  margin-top: 5px;
  background: #efefef;
  border: 1px solid #767676;
  border-radius: 2px;
}
.side-nav {
  padding-top: 22px;
}
.nav-item {
  height: 64.800px;
  padding-left: 27px;
  display: flex;
  align-items: center;
  font-size: 18px;
  color: #b5c2ce;
}
.nav-ic-box {
  width: 26px;
  margin-left: -2px;
  margin-right: 16px;
  display: flex;
  justify-content: center;
}

/* app main */
.main {
  flex: 1;
  min-width: 0;
  position: relative;
  overflow: hidden;
  background: linear-gradient(135deg, #0f1f28 0%, #13182a 55%, #1a1a2e 100%);
  color: #fff;
}
.app-top {
  height: 316px;
  display: flex;
  flex-direction: column;
  align-items: flex-start;
}
.search-row {
  width: 100%;
  height: 28px;
  display: flex;
  align-items: center;
}
.search-input {
  width: 195px;
  height: 20px;
  margin-left: 5px;
  padding: 0 2px;
  border: 1px solid #767676;
  border-radius: 2px;
  background: #fff;
  font-family: "Liberation Sans", Arial, sans-serif;
  font-size: 15px;
}
.search-input::placeholder {
  color: #757575;
}
.tune-ic {
  margin-left: auto;
  margin-right: 53px;
}
.moon {
  margin: 11px 0 0 9px;
}
.bell {
  margin-top: 17px;
}
.user {
  margin-top: 11px;
}
.user-name {
  margin-top: 10px;
  font-size: 18px;
  line-height: 20px;
}
.caret {
  margin-top: 14px;
}
.content {
  padding: 0 36px;
}
.page-head {
  height: 114px;
  display: flex;
  align-items: center;
  justify-content: space-between;
  padding: 0 27px;
  background: linear-gradient(135deg, #2a3440, #30343f);
  border: 1px solid #4a5059;
  border-radius: 20px;
}
.page-head h1 {
  margin: 0 0 -1px;
  font-size: 36px;
  font-weight: 700;
}
.refresh-btn {
  width: 137px;
  height: 45px;
  display: flex;
  align-items: center;
  justify-content: center;
  gap: 8px;
  border-radius: 12px;
  background: linear-gradient(135deg, #0ea5e9, #3b82f6);
  box-shadow: 0 4px 15px rgba(14, 165, 233, 0.3);
  font-family: "Liberation Sans", Arial, sans-serif;
  font-size: 16px;
  font-weight: 700;
  color: #fff;
}
.stats {
  margin-top: 36px;
  display: grid;
  grid-template-columns: repeat(3, 1fr);
  column-gap: 27px;
  row-gap: 55px;
}
.stat-card {
  height: 206px;
  position: relative;
  overflow: hidden;
  display: flex;
  flex-direction: column;
  align-items: center;
  padding-top: 44px;
  background: linear-gradient(135deg, #2a323d, #302f3c);
  border: 1px solid #4a5059;
  border-radius: 20px;
}
.stat-card::before {
  content: "";
  position: absolute;
  left: 0;
  right: 0;
  top: 0;
  height: 5px;
  background: linear-gradient(90deg, #0ea5e9, #3b82f6);
}
.stat-ic {
  height: 38px;
  color: #0f8fcf;
}
.stat-num {
  margin-top: 25px;
  font-size: 27px;
  line-height: 34px;
  font-weight: 700;
  letter-spacing: -0.5px;
  text-shadow: 0 2px 4px rgba(0, 0, 0, 0.5);
}
.stat-label {
  margin-top: 5px;
  font-size: 16px;
  line-height: 20px;
  color: #a9b1bc;
}
.fab {
  position: absolute;
  right: 33px;
  bottom: 32px;
  width: 68px;
  height: 68px;
  border-radius: 50%;
  display: flex;
  align-items: center;
  justify-content: center;
  background: linear-gradient(135deg, #3b82f6, #1e40af);
  box-shadow: 0 6px 22px rgba(59, 130, 246, 0.4);
}
.scrollbar {
  width: 23px;
  flex: none;
  position: relative;
  background: #fff;
}
.thumb {
  position: absolute;
  left: 6px;
  top: 26px;
  width: 12px;
  height: 173px;
  border-radius: 6px;
  background: #9d9d9d;
}
.arrow-up,
.arrow-down {
  position: absolute;
  left: 5px;
  width: 0;
  height: 0;
  border-left: 7px solid transparent;
  border-right: 7px solid transparent;
}
.arrow-up {
  top: 6px;
  border-bottom: 12px solid #9d9d9d;
}
.arrow-down {
  bottom: 3px;
  border-top: 12px solid #8a8a8a;
}

/* taskbar */
.taskbar {
  margin-top: 8px;
  height: 72px;
  flex: none;
  position: relative;
  display: flex;
  align-items: center;
  padding-left: 31px;
  background: linear-gradient(90deg, #f0e9ea 0%, #e6e9ec 12%, #d9e6ec 25%, #dce8ec 45%, #e6ebec 60%, #f1eaec 78%, #f1eaec 100%);
  color: #1a1a1a;
}
.win-logo {
  width: 35px;
  height: 35px;
}
.task-search {
  width: 328px;
  height: 46px;
  margin-left: 21px;
  display: flex;
  align-items: center;
  gap: 16px;
  padding-left: 16px;
  border: 2px solid #d6d9da;
  border-radius: 23px;
  background: #f6f8f9;
  font-size: 20px;
  color: #4a4a4a;
}
.task-apps {
  display: flex;
  margin-left: 9px;
  gap: 10px;
}
.app-slot {
  width: 56px;
  height: 56px;
  position: relative;
  display: flex;
  align-items: center;
  justify-content: center;
}
.app-slot.running::after {
  content: "";
  position: absolute;
  left: 23px;
  bottom: -6px;
  width: 9px;
  height: 5px;
  border-radius: 3px;
  background: #7b8083;
}
.app-slot.active {
  background: #eff4f6;
  border-radius: 5px;
  box-shadow: 0 1px 2px rgba(0, 0, 0, 0.15);
}
.app-slot.active::after {
  content: "";
  position: absolute;
  left: 16px;
  bottom: 0;
  width: 24px;
  height: 4px;
  border-radius: 2px;
  background: #6e7f8c;
}
.ic-rtg {
  width: 36px;
  height: 36px;
  position: relative;
  background: #000;
  border-radius: 4px;
  color: #fff;
  font-family: "Liberation Sans", Arial, sans-serif;
  font-weight: 700;
  font-size: 30px;
  line-height: 32px;
  padding-left: 7px;
}
.ic-rtg i {
  position: absolute;
  right: 8px;
  bottom: 8px;
  width: 7px;
  height: 7px;
  border-radius: 50%;
  background: #fff;
}
.ic-udemy {
  width: 36px;
  height: 36px;
  border-radius: 50%;
  background: #fff;
}
.ic-dc {
  width: 36px;
  height: 36px;
  background: #03ef62;
}
.ic-ist {
  width: 36px;
  height: 36px;
  border-radius: 5px;
  background: #03a9f0;
  color: #fff;
  font-family: "Liberation Sans", Arial, sans-serif;
  font-size: 19px;
  font-weight: 700;
  line-height: 36px;
  text-align: center;
}
.ic-chrome {
  width: 36px;
  height: 36px;
  border-radius: 50%;
  background: conic-gradient(#ea4335 0deg 120deg, #fbbc04 120deg 240deg, #34a853 240deg 360deg);
  transform: rotate(-30deg);
  display: flex;
  align-items: center;
  justify-content: center;
}
.ic-chrome i {
  width: 18px;
  height: 18px;
  border-radius: 50%;
  background: #3d82f0;
  border: 3px solid #fff;
}
.thumb-pic {
  position: absolute;
  right: 2px;
  top: 3px;
  width: 24px;
  height: 24px;
  border-radius: 50%;
  background: radial-gradient(circle at 50% 55%, #3a3240 0%, #6a6470 55%, #8d8a90 100%);
}
.count-badge {
  position: absolute;
  left: 25px;
  top: 3px;
  width: 30px;
  height: 24px;
  border-radius: 12px;
  background: #66757f;
  color: #fff;
  font-size: 15px;
  line-height: 24px;
  text-align: center;
}
.tray {
  margin-left: auto;
  display: flex;
  align-items: center;
  padding-right: 29px;
}
.tray-caret {
  margin-right: 25px;
}
.lang {
  width: 34px;
  font-size: 16.500px;
  line-height: 23px;
  text-align: center;
  margin-right: 28px;
}
.tray-ic {
  margin-right: 12px;
}
.clock {
  width: 100px;
  margin-left: 3px;
  font-size: 17.500px;
  line-height: 23px;
  text-align: right;
  white-space: nowrap;
}
```
